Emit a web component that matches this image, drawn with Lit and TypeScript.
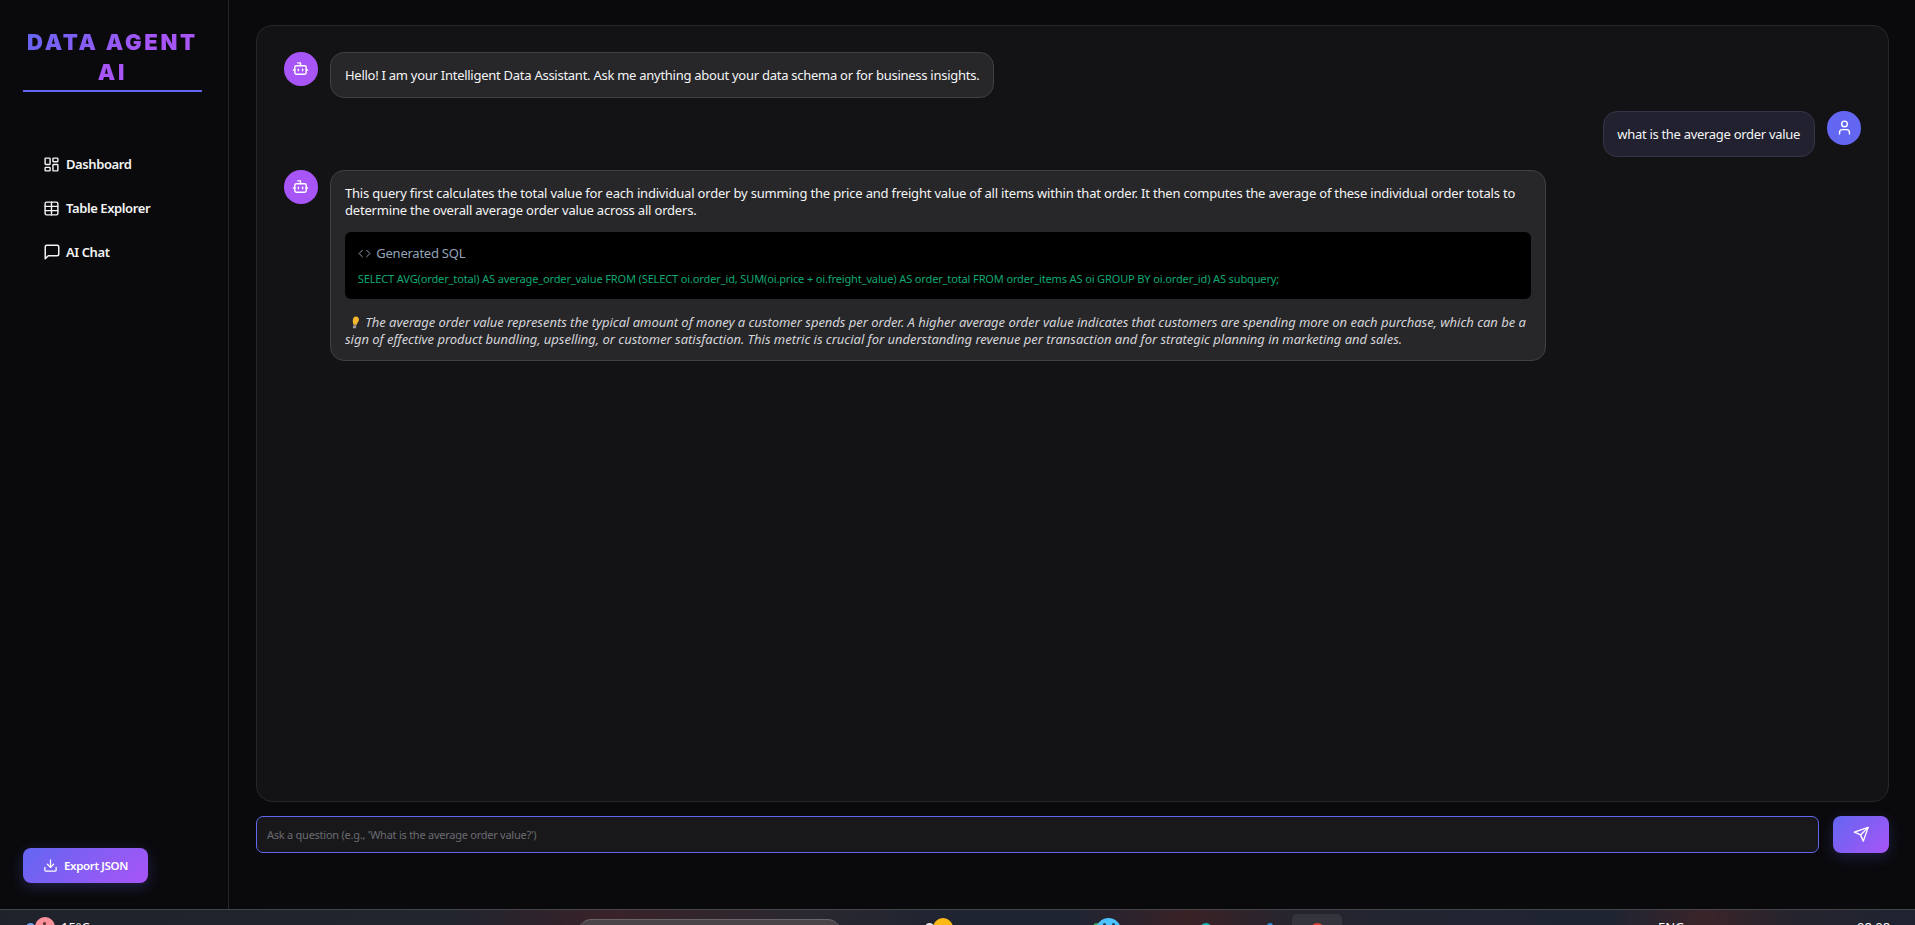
import { LitElement, html, css, svg } from "lit";
import { customElement } from "lit/decorators.js";

const ic = (body: unknown, cls = "") => html`<svg class="ic ${cls}" viewBox="0 0 24 24" fill="none" stroke="currentColor" stroke-width="2" stroke-linecap="round" stroke-linejoin="round">${body}</svg>`;

const dash = svg`<rect x="3" y="3" width="7" height="9" rx="1"/><rect x="14" y="3" width="7" height="5" rx="1"/><rect x="14" y="12" width="7" height="9" rx="1"/><rect x="3" y="16" width="7" height="5" rx="1"/>`;
const table = svg`<path d="M12 3v18"/><rect width="18" height="18" x="3" y="3" rx="2"/><path d="M3 9h18"/><path d="M3 15h18"/>`;
const chat = svg`<path d="M21 15a2 2 0 0 1-2 2H7l-4 4V5a2 2 0 0 1 2-2h14a2 2 0 0 1 2 2z"/>`;
const bot = svg`<path d="M12 8V4H8"/><rect width="16" height="12" x="4" y="8" rx="2"/><path d="M2 14h2"/><path d="M20 14h2"/><path d="M15 13v2"/><path d="M9 13v2"/>`;
const user = svg`<path d="M19 21v-2a4 4 0 0 0-4-4H9a4 4 0 0 0-4 4v2"/><circle cx="12" cy="7" r="4"/>`;
const code = svg`<polyline points="16 18 22 12 16 6"/><polyline points="8 6 2 12 8 18"/>`;
const download = svg`<path d="M21 15v4a2 2 0 0 1-2 2H5a2 2 0 0 1-2-2v-4"/><polyline points="7 10 12 15 17 10"/><line x1="12" y1="15" x2="12" y2="3"/>`;
const send = svg`<path d="m22 2-7 20-4-9-9-4Z"/><path d="M22 2 11 13"/>`;

/* Tops of the tray icons that stick up into the visible strip of the taskbar: x, y, size, colour. */
const trayDots: [number, number, number, string][] = [
  [26, 13, 9, "#6d9eea"],
  [35, 7, 20, "#f9919b"],
  [43, 12, 3, "#5a2b33"],
  [925, 13, 9, "#e8e8ec"],
  [933, 8, 20, "#fdb913"],
  [1093, 13, 8, "#2fae5a"],
  [1096, 8, 25, "#4cc2ff"],
  [1103, 13, 3, "#1d3a55"],
  [1112, 13, 3, "#1d3a55"],
  [1200, 13, 12, "#18b6b6"],
  [1267, 13, 6, "#2a8fe0"],
];

@customElement("app-root")
export class AppRoot extends LitElement {
  static styles = css`
    :host { display: flex; flex-direction: column; height: 925px; overflow: hidden; background: #0a0a0d; color: #f4f4f5; font-family: "Noto Sans", "Open Sans", sans-serif; font-size: 13px; line-height: 17px; }
    * { box-sizing: border-box; }
    .ic { display: block; flex: none; width: 17px; height: 17px; }
    .top { flex: 1; display: flex; min-height: 0; }
    .side { width: 229px; flex: none; border-right: 1px solid #27272a; padding: 27px 26px 26px 23px; display: flex; flex-direction: column; background: #0a0a0d; }
    .title { width: 179px; font-family: Inter, sans-serif; font-weight: 900; font-size: 22px; line-height: 30px; letter-spacing: 2.7px; text-align: center; padding-bottom: 3px; border-bottom: 2px solid #6366f1; }
    .title span { background: linear-gradient(135deg, #6366f1, #a855f7 62%); -webkit-background-clip: text; background-clip: text; color: transparent; }
    nav { margin-top: 50px; display: flex; flex-direction: column; }
    .item { height: 44px; display: flex; align-items: center; gap: 6px; padding-left: 20px; font-weight: 600; font-size: 13px; color: #f4f4f5; letter-spacing: -0.4px; }
    .item .wide { width: 18px; height: 18px; margin-right: -1px; }
    .export { margin-top: auto; width: 125px; height: 35px; border-radius: 8px; display: flex; align-items: center; justify-content: center; gap: 6px; color: #fff; font-weight: 600; font-size: 11.5px; letter-spacing: -0.35px; background: linear-gradient(135deg, #6366f1, #a855f7); box-shadow: 0 4px 14px rgba(99, 102, 241, 0.25); }
    .export .ic { width: 15px; height: 15px; }
    .main { flex: 1; min-width: 0; display: flex; flex-direction: column; padding: 25px 26px 56px 27px; }
    .panel { flex: 1; min-height: 0; background: #131316; border: 1px solid #27272a; border-radius: 16px; padding: 26px 27px; display: flex; flex-direction: column; gap: 12.8px; }
    .msg { display: flex; gap: 12.8px; max-width: 80%; align-items: flex-start; }
    .msg.me { align-self: flex-end; flex-direction: row-reverse; }
    .av { width: 33.6px; height: 33.6px; flex: none; border-radius: 50%; display: flex; align-items: center; justify-content: center; color: #fff; background: #a855f7; }
    .me .av { background: #6366f1; }
    .bubble { background: #27272a; border: 1px solid #3f3f46; border-radius: 14px; padding: 13.6px; min-width: 0; letter-spacing: -0.265px; }
    .me .bubble { background: #212130; border-color: #343447; letter-spacing: -0.3px; }
    .bubble.long { padding-bottom: 12.5px; }
    p { margin: 0; }
    .lead { letter-spacing: -0.19px; }
    .sql { margin: 13.6px 0 14.5px; background: #000; border-radius: 6px; padding: 13.3px 12.8px 0; height: 67px; letter-spacing: -0.24px; }
    .sqlh { display: flex; align-items: center; gap: 5.5px; color: #94a3b8; }
    .sqlh .ic { width: 13px; height: 13px; stroke-width: 1.8; }
    code { display: block; margin-top: 8px; font-family: "Noto Sans", sans-serif; font-size: 11px; color: #10a874; white-space: nowrap; letter-spacing: -0.13px; }
    .note { font-style: italic; color: #d4d4d8; letter-spacing: -0.03px; }
    .bulb { display: inline-block; width: 11px; height: 13px; vertical-align: -2px; margin: 0 2px 0 4px; }
    .compose { display: flex; gap: 14px; margin-top: 14px; height: 37px; }
    .input { flex: 1; background: #18181b; border: 1px solid #6366f1; border-radius: 7px; padding-left: 10px; display: flex; align-items: center; color: #6b6b70; font-size: 11px; letter-spacing: -0.25px; }
    .go { width: 56px; flex: none; border-radius: 8px; display: flex; align-items: center; justify-content: center; color: #fff; background: linear-gradient(135deg, #6366f1, #a855f7); box-shadow: 0 4px 14px rgba(99, 102, 241, 0.22); }
    .go .ic { width: 16.5px; height: 16.5px; stroke-width: 2; }
    .bar { position: relative; height: 16px; flex: none; overflow: hidden; border-top: 1px solid #45454c; background: linear-gradient(90deg, #1f212b 0, #22242e 24%, #3a2229 32%, #2a2830 42%, #1f2431 50%, #1f2432 56%, #3a2226 62%, #24252f 68%, #1f2432 84%, #3a2429 89%, #24242e 94%, #1f2330 100%); }
    .bar > * { position: absolute; }
    .s { color: #fff; font-size: 13px; top: 9px; line-height: 16px; }
    .weather { left: 61px; }
    .lang { left: 1658px; }
    .clock { left: 1857px; }
    .dot { border-radius: 50%; }
    .search { left: 577px; top: 9px; width: 265px; height: 30px; border-radius: 15px; background: #4a4347; border-top: 1px solid #6b666a; }
    .tile { left: 1292px; top: 4px; width: 50px; height: 30px; border-radius: 5px; background: #33343c; }
    .rec { left: 1310px; top: 13px; width: 15px; height: 15px; border-radius: 50%; background: #d8402f; }
  `;

  render() {
    return html`
      <div class="top">
        <aside class="side">
          <div class="title"><span>DATA AGENT AI</span></div>
          <nav>
            <div class="item">${ic(dash)}<span>Dashboard</span></div>
            <div class="item">${ic(table)}<span>Table Explorer</span></div>
            <div class="item">${ic(chat, "wide")}<span>AI Chat</span></div>
          </nav>
          <div class="export">${ic(download)}<span>Export JSON</span></div>
        </aside>
        <main class="main">
          <section class="panel">
            <div class="msg">
              <div class="av">${ic(bot)}</div>
              <div class="bubble">Hello! I am your Intelligent Data Assistant. Ask me anything about your data schema or for business insights.</div>
            </div>
            <div class="msg me">
              <div class="av">${ic(user)}</div>
              <div class="bubble">what is the average order value</div>
            </div>
            <div class="msg">
              <div class="av">${ic(bot)}</div>
              <div class="bubble long">
                <p class="lead">This query first calculates the total value for each individual order by summing the price and freight value of all items within that order. It then computes the average of these individual order totals to determine the overall average order value across all orders.</p>
                <div class="sql">
                  <div class="sqlh">${ic(code)}<span>Generated SQL</span></div>
                  <code>SELECT AVG(order_total) AS average_order_value FROM (SELECT oi.order_id, SUM(oi.price + oi.freight_value) AS order_total FROM order_items AS oi GROUP BY oi.order_id) AS subquery;</code>
                </div>
                <p class="note"><svg class="bulb" viewBox="0 0 11 13"><path d="M6.8 0.5c2.3 0 3.6 1.8 3 4-.4 1.500-1.600 2.400-2.100 4.200H4.400c0-1.700-.8-2.600-.6-4.300C4 2.200 5 .5 6.800 .5z" fill="#f5b82e"/><path d="M4.300 9.200h3.200l-.6 3H3.800z" fill="#9a9aa0"/></svg> The average order value represents the typical amount of money a customer spends per order. A higher average order value indicates that customers are spending more on each purchase, which can be a sign of effective product bundling, upselling, or customer satisfaction. This metric is crucial for understanding revenue per transaction and for strategic planning in marketing and sales.</p>
              </div>
            </div>
          </section>
          <div class="compose">
            <div class="input">Ask a question (e.g., 'What is the average order value?')</div>
            <div class="go">${ic(send)}</div>
          </div>
        </main>
      </div>
      <footer class="bar">
        <div class="search"></div>
        <div class="tile"></div>
        <div class="rec"></div>
        ${trayDots.map(([x, y, d, c]) => html`<div class="dot" style="left:${x}px;top:${y}px;width:${d}px;height:${d}px;background:${c}"></div>`)}
        <span class="s weather">15°C</span>
        <span class="s lang">ENG</span>
        <span class="s clock">08:08</span>
      </footer>
    `;
  }
}
